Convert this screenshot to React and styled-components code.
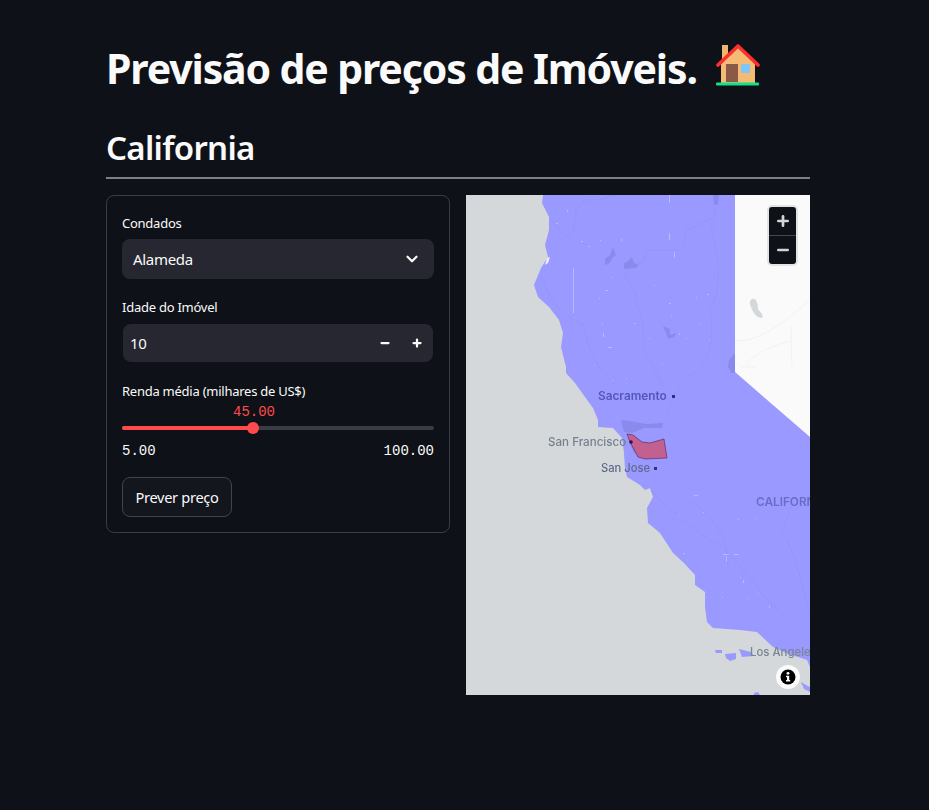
import React from "react";
import styled, { createGlobalStyle } from "styled-components";
import { ChevronDown, Minus, Plus } from "lucide-react";

const GlobalStyle = createGlobalStyle`
  body {
    margin: 0;
    background: #0e1117;
    color: #fafafa;
    font-family: "Noto Sans", "Open Sans", sans-serif;
  }
`;

const Page = styled.div`
  height: 810px;
  padding: 0 0 0 106px;
  box-sizing: border-box;
  overflow: hidden;
`;
const Content = styled.main`
  width: 704px;
  padding-top: 39px;
`;
const Title = styled.h1`
  margin: 0;
  height: 58px;
  display: flex;
  align-items: center;
  font-size: 41px;
  line-height: 58px;
  font-weight: 700;
  letter-spacing: -1.13px;
  white-space: nowrap;
`;
const HouseIcon = styled.svg`
  margin-left: 19px;
  margin-top: -6px;
  width: 44px;
  height: 44px;
`;
const Subtitle = styled.h2`
  margin: 29px 0 0;
  font-size: 33px;
  line-height: 44px;
  font-weight: 600;
  letter-spacing: -0.7px;
`;
const Divider = styled.hr`
  margin: 7px 0 16px;
  height: 2px;
  border: 0;
  background: #7d7e8b;
`;
const Columns = styled.div`
  display: flex;
  align-items: flex-start;
  gap: 16px;
`;
const Card = styled.section`
  width: 344px;
  height: 338px;
  box-sizing: border-box;
  padding: 18px 15px 0;
  border: 1px solid #3b3d45;
  border-radius: 8px;
`;
const Label = styled.div`
  font-size: 13px;
  line-height: 18px;
  letter-spacing: -0.25px;
  color: #fafafa;
`;
const Select = styled.div`
  margin: 7px 0 19px;
  height: 40px;
  padding: 0 13px 0 11px;
  display: flex;
  align-items: center;
  justify-content: space-between;
  background: #262730;
  border-radius: 8px;
  font-size: 15px;
  letter-spacing: -0.3px;
`;
const NumberField = styled.div`
  margin: 8px 1px 20px;
  height: 38px;
  padding: 0 8px 0 7px;
  display: flex;
  align-items: center;
  justify-content: space-between;
  background: #262730;
  border-radius: 8px;
  font-size: 15px;
  letter-spacing: -0.3px;
`;
const Steppers = styled.div`
  display: flex;
  gap: 16px;
`;
const Stepper = styled.span`
  width: 16px;
  height: 16px;
  display: flex;
  align-items: center;
  justify-content: center;
`;
const Mono = styled.div`
  font-family: "Liberation Mono", monospace;
  font-size: 14px;
  line-height: 16px;
  color: ${(p) => p.color || "#fafafa"};
`;
const SliderValue = styled(Mono)`
  margin-left: 111px;
  margin-top: 4px;
`;
const Track = styled.div`
  position: relative;
  margin-top: 6px;
  height: 4px;
  border-radius: 2px;
  background: #3a3b44;
`;
const TrackFill = styled.div`
  height: 100%;
  border-radius: 2px;
  background: #ff4b4b;
`;
const Thumb = styled.div`
  position: absolute;
  top: -4px;
  width: 12px;
  height: 12px;
  margin-left: -6px;
  border-radius: 50%;
  background: #ff4b4b;
`;
const SliderEnds = styled.div`
  margin-top: 13px;
  display: flex;
  justify-content: space-between;
`;
const Button = styled.button`
  margin-top: 18px;
  width: 110px;
  height: 40px;
  padding: 0;
  background: #13161d;
  border: 1px solid #41434e;
  border-radius: 8px;
  color: #fafafa;
  font-family: inherit;
  font-size: 14.6px;
  letter-spacing: -0.3px;
`;
const MapFrame = styled.div`
  position: relative;
  width: 344px;
  height: 500px;
  overflow: hidden;
  background: #d4d8da;
`;
const MapCanvas = styled.svg`
  display: block;
  width: 344px;
  height: 500px;
`;
const MapLabel = styled.text`
  font-family: "Inter", "Noto Sans", sans-serif;
  font-size: ${(p) => p.$size || 11.5}px;
  font-weight: ${(p) => p.$weight || 500};
  fill: ${(p) => p.$color};
`;
const ZoomControl = styled.div`
  position: absolute;
  top: 10px;
  right: 12px;
  width: 31px;
  height: 61px;
  box-sizing: border-box;
  display: flex;
  flex-direction: column;
  background: #0e1117;
  border: 2px solid #e2e3e4;
  border-radius: 5px;
`;
const ZoomButton = styled.div`
  flex: 1;
  display: flex;
  align-items: center;
  justify-content: center;
  color: #d4d6d6;
  & + & {
    border-top: 1px solid #44464c;
  }
`;
const InfoBadge = styled.div`
  position: absolute;
  right: 10px;
  bottom: 6px;
  width: 24px;
  height: 24px;
  display: flex;
  align-items: center;
  justify-content: center;
  border-radius: 50%;
  background: #fbfbfb;
`;

const land =
  "M77,0 L76,8 L83,22 L83,35 L79,50 L82,62 L75,73 L68,90 L72,102 L83,112 L93,125 L97,138 L95,152 L100,172 L100,178 L109,188 L119,202 L127,213 L132,225 L132,232 L147,233 L156,243 L158,258 L159,273 L161,282 L174,290 L179,295 L184,293 L187,302 L181,313 L182,328 L194,338 L207,358 L218,368 L229,380 L229,390 L239,397 L239,412 L241,427 L247,433 L274,435 L291,437 L307,452 L320,458 L341,465 L344,472 L344,242 L269,177 L269,0 Z";
const alameda =
  "M161,239 L164,247 L172,262 L179,264 L201,263 L198,244 L184,248 L176,247 L167,240 Z";
const rivers = [
  "M85,23 L92,33 L102,42 L108,35 L110,15 L118,5 L133,5 L150,0",
  "M249,13 L248,23 L220,35 L217,55 L182,55 L177,67 L163,73 L159,80 L170,98 L170,105 L177,128 L178,155 L197,192",
  "M75,80 C88,115 100,122 118,130 C122,150 126,170 150,190",
  "M245,30 C252,60 258,90 244,115 C250,150 240,170 228,178 C210,190 204,210 200,222",
  "M180,290 C198,310 232,340 256,352 C276,372 296,400 318,422",
  "M224,305 C250,322 262,345 262,370 M330,300 L316,335 C330,360 336,390 344,420",
];
const lakes = [
  "M147,52 L150,60 L146,63 L144,68 L139,70 L139,64 L144,60 Z",
  "M166,62 L168,68 L173,70 L170,73 L158,74 L158,68 L162,66 Z",
  "M197,131 L204,134 L204,140 L211,138 L208,142 L202,144 L200,138 Z",
  "M155,225 L164,226 L180,229 L197,228 L196,233 L178,233 L166,238 L158,237 Z",
  "M162,243 L168,248 L174,262 L168,258 Z",
  "M247,0 L253,0 L252,9 L248,10 Z",
  "M263,165 L269,158 L269,178 L265,178 L262,172 Z",
];
const specks = [
  [203, 0, 1, 8], [203, 38, 1, 7], [208, 57, 1, 6], [107, 73, 1, 45], [101, 15, 1, 2], [90, 28, 2, 1],
  [115, 46, 2, 1], [122, 51, 2, 1], [134, 45, 1, 1], [155, 44, 1, 2], [145, 82, 1, 1], [139, 95, 3, 1],
  [188, 90, 1, 1], [230, 102, 1, 1], [241, 99, 2, 1], [133, 103, 1, 1], [168, 128, 2, 1], [136, 128, 1, 1],
  [137, 138, 1, 4], [142, 152, 4, 1], [183, 143, 1, 1], [220, 143, 1, 1], [203, 108, 2, 1], [205, 120, 1, 1],
  [213, 138, 1, 2], [234, 128, 1, 1], [243, 145, 1, 1], [196, 168, 1, 1], [160, 183, 1, 1], [146, 185, 1, 1],
  [128, 170, 1, 1], [228, 300, 4, 1], [257, 359, 6, 1], [268, 359, 5, 1], [260, 361, 1, 6], [274, 382, 1, 1],
  [277, 385, 1, 3], [292, 398, 1, 1], [303, 411, 1, 2], [212, 320, 1, 1], [237, 317, 1, 1], [289, 323, 1, 1],
  [272, 324, 1, 1], [217, 358, 2, 1], [256, 402, 1, 1], [281, 403, 1, 1], [180, 347, 1, 1], [240, 402, 1, 1],
];
const islands = [
  "M249,455 L256,455 L256,458 L250,458 Z",
  "M259,459 L270,458 L270,464 L264,466 L260,463 Z",
  "M273,454 L285,457 L288,461 L276,462 Z",
  "M335,487 L340,490 L344,492 L344,497 L338,494 Z",
  "M288,498 L292,497 L294,500 L288,500 Z",
];

const CaliforniaMap = () => (
  <MapCanvas viewBox="0 0 344 500">
    <defs>
      <filter id="soft">
        <feGaussianBlur stdDeviation="0.3" />
      </filter>
      <clipPath id="landClip">
        <path d={land} />
      </clipPath>
    </defs>
    <rect x="269" y="0" width="75" height="260" fill="#fafafa" />
    <g fill="none" stroke="#f0f0ef" strokeWidth="0.8">
      <path d="M269,146 C290,146 310,135 344,105" />
      <path d="M280,172 C282,160 310,150 324,146 M275,172 L290,172" />
      <path d="M325,130 L326,176" />
    </g>
    <path d="M286,104 C290,103 292,108 292,114 C295,118 298,120 296,123 C291,123 287,118 285,112 C283,108 284,105 286,104 Z" fill="#d4d8da" />
    <path d={land} fill="#9999ff" />
    {islands.map((d) => (
      <path key={d} d={d} fill="#9999ff" />
    ))}
    <g clipPath="url(#landClip)">
      <g filter="url(#soft)">
        {rivers.map((d) => (
          <path key={d} d={d} fill="none" stroke="#9292f6" strokeWidth="0.7" />
        ))}
        {lakes.map((d) => (
          <path key={d} d={d} fill="#8a8aec" />
        ))}
      </g>
      {specks.map(([x, y, w, h]) => (
        <rect key={`${x}-${y}`} x={x} y={y} width={w} height={h} fill="#b9b9f8" />
      ))}
    </g>
    <path d="M81,63 L84,62 L82,68 L79,70 Z" fill="#eeeeff" />
    <g filter="url(#soft)">
      <MapLabel x="132" y="205" $size="11.8" $color="#5358b8" $weight="600">Sacramento</MapLabel>
      <MapLabel x="82" y="251" $size="11.6" $color="#75808e">San Francisco</MapLabel>
      <MapLabel x="135" y="277" $size="11.2" $color="#5f6a8c">San Jose</MapLabel>
      <MapLabel x="290" y="311" $size="11.8" $color="#6a6cc6" $weight="600">CALIFORNIA</MapLabel>
      <MapLabel x="284" y="461" $size="11.4" $color="#7a8590">Los Angeles</MapLabel>
    </g>
    <rect x="206" y="200" width="3" height="3" fill="#2f3080" />
    <path d={alameda} fill="#c2608f" stroke="#5f2e6a" strokeWidth="0.7" />
    <circle cx="165" cy="247" r="1.8" fill="#3d1030" />
    <rect x="188" y="272" width="3" height="3" fill="#2f3080" />
  </MapCanvas>
);

const House = () => (
  <HouseIcon viewBox="16 4 44 44">
    <rect x="22" y="6" width="6" height="16" fill="#f0b46c" />
    <path d="M21,25 L38,8 L55,25 V44 H21 Z" fill="#f3bb73" />
    <rect x="26" y="25" width="12" height="18" fill="#8b5a46" />
    <rect x="41" y="25" width="9" height="9" rx="1" fill="#7fc6f7" />
    <path d="M18,26 L38,7 L58,26" fill="none" stroke="#ff2e2e" strokeWidth="3.6" strokeLinecap="round" strokeLinejoin="round" />
    <rect x="16" y="43.5" width="43" height="3" rx="1" fill="#14e089" />
  </HouseIcon>
);

export default function App() {
  const sliderPercent = ((45 - 5) / 95) * 100;
  return (
    <Page>
      <GlobalStyle />
      <Content>
        <Title>
          Previsão de preços de Imóveis.
          <House />
        </Title>
        <Subtitle>California</Subtitle>
        <Divider />
        <Columns>
          <Card>
            <Label>Condados</Label>
            <Select>
              Alameda
              <ChevronDown size={18} strokeWidth={3} color="#fafafa" />
            </Select>
            <Label>Idade do Imóvel</Label>
            <NumberField>
              10
              <Steppers>
                <Stepper>
                  <Minus size={12} strokeWidth={4.5} />
                </Stepper>
                <Stepper>
                  <Plus size={12} strokeWidth={4.5} />
                </Stepper>
              </Steppers>
            </NumberField>
            <Label>Renda média (milhares de US$)</Label>
            <SliderValue color="#ff4b4b">45.00</SliderValue>
            <Track>
              <TrackFill style={{ width: `${sliderPercent}%` }} />
              <Thumb style={{ left: `${sliderPercent}%` }} />
            </Track>
            <SliderEnds>
              <Mono>5.00</Mono>
              <Mono>100.00</Mono>
            </SliderEnds>
            <Button>Prever preço</Button>
          </Card>
          <MapFrame>
            <CaliforniaMap />
            <ZoomControl>
              <ZoomButton>
                <Plus size={16} strokeWidth={4} />
              </ZoomButton>
              <ZoomButton>
                <Minus size={16} strokeWidth={4} />
              </ZoomButton>
            </ZoomControl>
            <InfoBadge>
              <svg width="16" height="16" viewBox="0 0 16 16">
                <circle cx="8" cy="8" r="7.5" fill="#000" />
                <circle cx="8" cy="4.3" r="1.4" fill="#fff" />
                <path d="M6,6.8 H9.2 V11 H10.2 V12.4 H6 V11 H7 V8.2 H6 Z" fill="#fff" />
              </svg>
            </InfoBadge>
          </MapFrame>
        </Columns>
      </Content>
    </Page>
  );
}
